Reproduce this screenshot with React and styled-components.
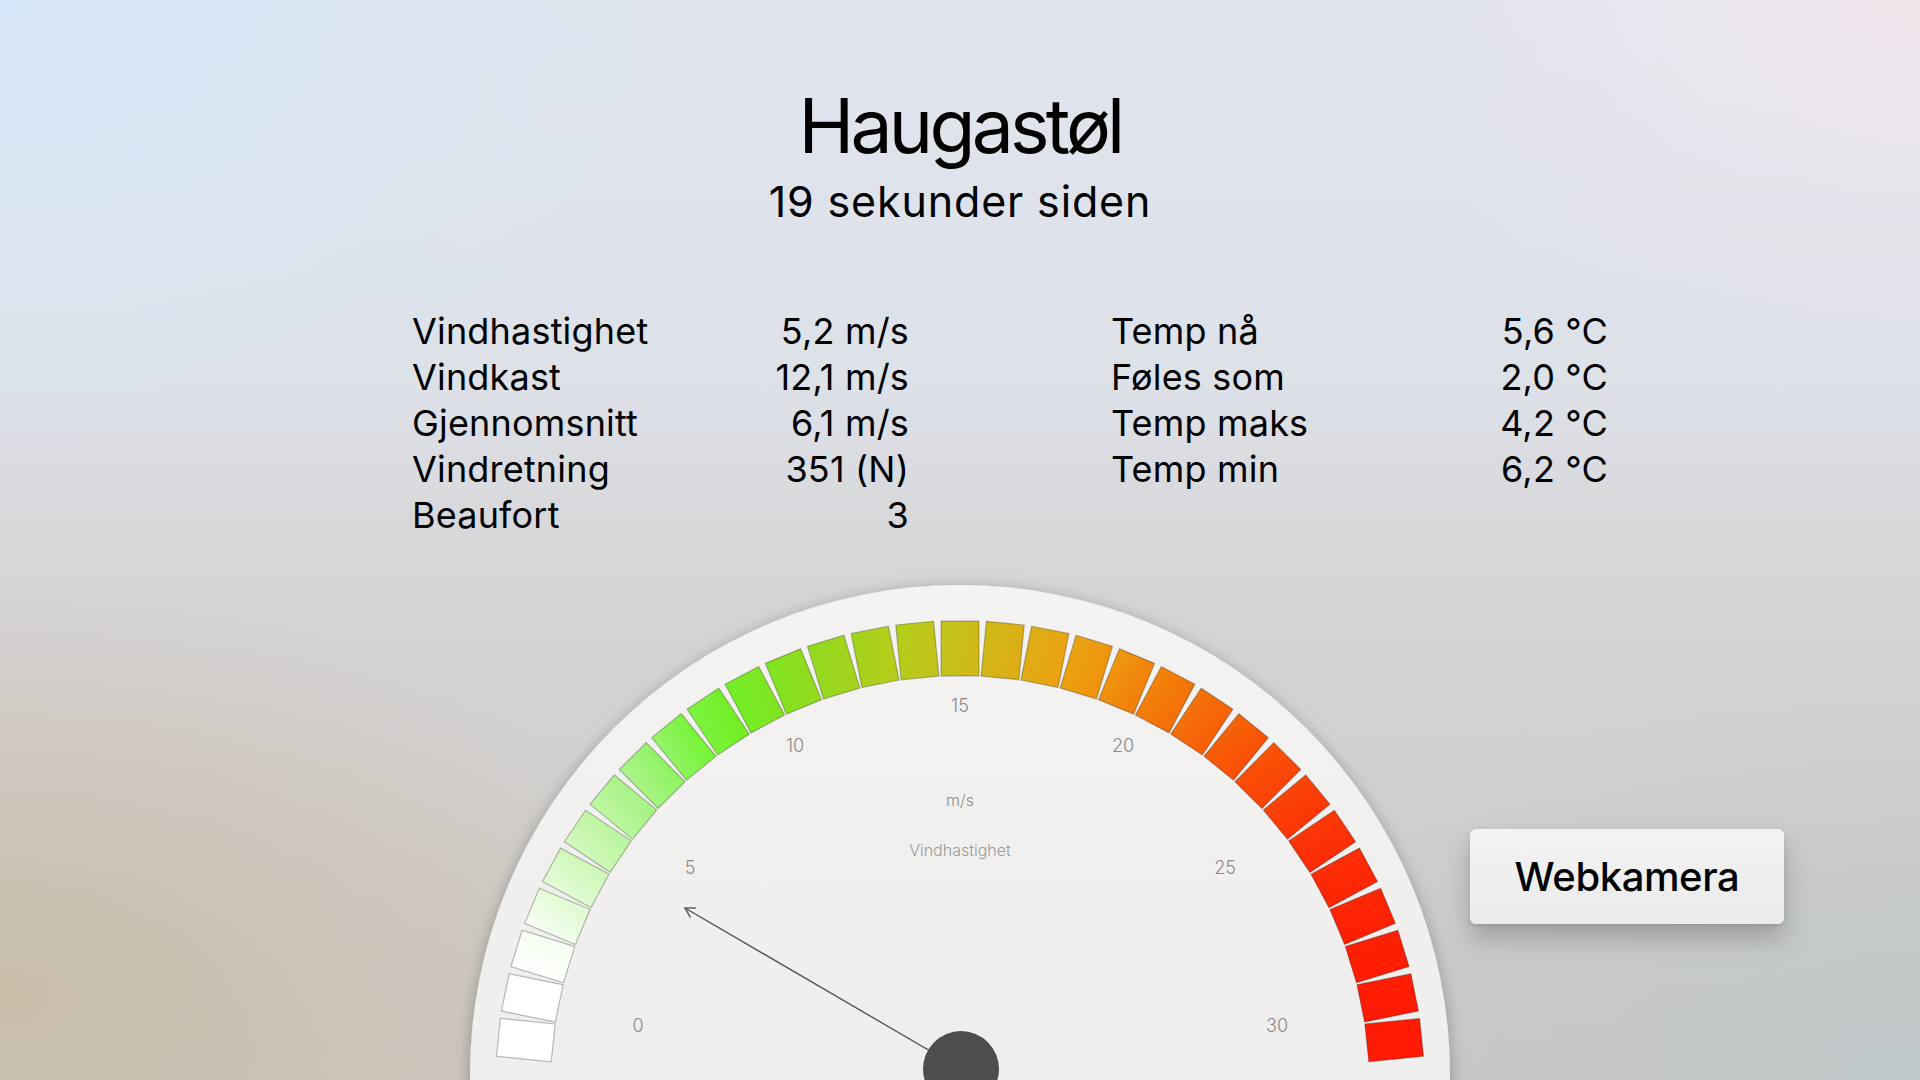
import React from "react";
import styled, { createGlobalStyle } from "styled-components";

const GlobalStyle = createGlobalStyle`
  html, body { margin: 0; padding: 0; height: 100%; overflow: hidden; }
  body { font-family: Inter, "Noto Sans", "Liberation Sans", sans-serif; color: #000; }
  #root { height: 100%; }
`;

const Page = styled.main`
  height: 100vh;
  width: 100vw;
  overflow: hidden;
  display: flex;
  flex-direction: column;
  align-items: center;
  background:
    radial-gradient(ellipse 900px 620px at 0% 0%, rgba(214, 232, 250, 0.95), rgba(214, 232, 250, 0) 72%),
    radial-gradient(ellipse 760px 520px at 100% 0%, rgba(241, 230, 236, 0.95), rgba(241, 230, 236, 0) 72%),
    radial-gradient(ellipse 900px 540px at 0% 92%, rgba(201, 189, 168, 0.95), rgba(201, 189, 168, 0) 76%),
    radial-gradient(ellipse 900px 520px at 100% 100%, rgba(191, 199, 201, 0.95), rgba(191, 199, 201, 0) 76%),
    linear-gradient(180deg, #e0e5ef 0%, #dde1e8 35%, #d6d4d6 55%, #cbc8c3 100%);
`;

const Header = styled.header`
  display: flex;
  flex-direction: column;
  align-items: center;
  padding-top: 88px;
`;

const Title = styled.h1`
  margin: 0;
  font-size: 75px;
  line-height: 76px;
  font-weight: 400;
  letter-spacing: -0.05em;
`;

const Subtitle = styled.p`
  margin: 16px 0 0;
  font-size: 43px;
  line-height: 43px;
  font-weight: 400;
  letter-spacing: 0.02em;
`;

const Stats = styled.section`
  align-self: flex-start;
  margin: 85px 0 0 412px;
  display: grid;
  grid-template-columns: 497px 497px;
  column-gap: 202px;
  align-items: start;
`;

const StatTable = styled.dl`
  margin: 0;
  display: grid;
  grid-template-columns: 1fr auto;
  grid-auto-rows: 46px;
  font-size: 36px;
  line-height: 46px;
  letter-spacing: 0.005em;
`;

const Label = styled.dt`
  margin: 0;
`;

const Value = styled.dd`
  margin: 0;
  text-align: right;
`;

const GaugeArea = styled.section`
  width: 100%;
  margin-top: 37px;
  display: grid;
  grid-template-columns: 1fr 1000px 1fr;
  align-items: start;
`;

const GaugeSvg = styled.svg`
  grid-column: 2;
  display: block;
  width: 1000px;
  height: 505px;
  overflow: visible;
  font-family: Inter, "Noto Sans", sans-serif;
`;

const CamButton = styled.button`
  grid-column: 3;
  justify-self: start;
  margin: 254px 0 0 10px;
  width: 314px;
  height: 95px;
  border: none;
  border-radius: 6px;
  background: linear-gradient(180deg, #f4f3f3 0%, #ecebeb 100%);
  box-shadow: 0 14px 26px rgba(0, 0, 0, 0.22), 0 2px 4px rgba(0, 0, 0, 0.08);
  font-family: Inter, "Noto Sans", sans-serif;
  font-size: 40px;
  font-weight: 500;
  letter-spacing: -0.01em;
  color: #000;
  padding: 0;
  cursor: pointer;
`;

const windStats = [
  ["Vindhastighet", "5,2 m/s"],
  ["Vindkast", "12,1 m/s"],
  ["Gjennomsnitt", "6,1 m/s"],
  ["Vindretning", "351 (N)"],
  ["Beaufort", "3"],
];

const tempStats = [
  ["Temp nå", "5,6 °C"],
  ["Føles som", "2,0 °C"],
  ["Temp maks", "4,2 °C"],
  ["Temp min", "6,2 °C"],
];

const stops = [
  [0, [255, 255, 255]],
  [2, [255, 255, 255]],
  [3, [236, 252, 228]],
  [5, [200, 247, 176]],
  [7, [160, 242, 124]],
  [9, [110, 245, 42]],
  [10, [118, 234, 34]],
  [12, [154, 214, 30]],
  [14, [188, 203, 26]],
  [15, [200, 192, 26]],
  [16, [214, 180, 24]],
  [17, [226, 168, 20]],
  [18, [240, 160, 16]],
  [19, [240, 140, 12]],
  [20, [242, 122, 10]],
  [21, [245, 106, 8]],
  [22, [248, 90, 6]],
  [23, [250, 74, 6]],
  [25, [252, 50, 5]],
  [27, [254, 34, 4]],
  [30, [255, 26, 3]],
];

function colorAt(v) {
  const t = Math.max(0, Math.min(30, v));
  for (let i = 0; i < stops.length - 1; i++) {
    const [a, ca] = stops[i];
    const [b, cb] = stops[i + 1];
    if (t >= a && t <= b) {
      const f = b === a ? 0 : (t - a) / (b - a);
      const c = ca.map((x, k) => Math.round(x + (cb[k] - x) * f));
      return `rgb(${c[0]},${c[1]},${c[2]})`;
    }
  }
  return "rgb(255,26,3)";
}

const FACE_CX = 500;
const FACE_CY = 500;
const RING_CX = 500;
const RING_CY = 510;
const START = 5.9;
const STEP = (180 - 2 * START) / 30;

const labels = [
  ["0", 178, 450],
  ["5", 230, 292],
  ["10", 335, 170],
  ["15", 500, 130],
  ["20", 663, 170],
  ["25", 765, 292],
  ["30", 817, 450],
];

function Gauge() {
  const segs = Array.from({ length: 31 }, (_, v) => v);
  const tip = [225, 333];
  const hub = [501, 494];
  const dx = tip[0] - hub[0];
  const dy = tip[1] - hub[1];
  const len = Math.hypot(dx, dy);
  const ux = -dx / len;
  const uy = -dy / len;
  const rot = (x, y, a) => [x * Math.cos(a) - y * Math.sin(a), x * Math.sin(a) + y * Math.cos(a)];
  const b1 = rot(ux, uy, Math.PI / 6);
  const b2 = rot(ux, uy, -Math.PI / 6);
  const L = 11;
  return (
    <GaugeSvg viewBox="0 0 1000 505">
      <defs>
        <filter id="faceShadow" x="-10%" y="-10%" width="120%" height="130%">
          <feDropShadow dx="0" dy="3" stdDeviation="8" floodColor="#000" floodOpacity="0.28" />
        </filter>
        <linearGradient id="faceFill" x1="0" y1="0" x2="0" y2="1">
          <stop offset="0" stopColor="#f5f3f2" />
          <stop offset="1" stopColor="#ebe9e8" />
        </linearGradient>
        {segs.map((v) => (
          <linearGradient key={v} id={`seg${v}`} x1="0" y1="0" x2="1" y2="0.3">
            <stop offset="0" stopColor={colorAt(v - 0.6)} />
            <stop offset="1" stopColor={colorAt(v + 0.6)} />
          </linearGradient>
        ))}
      </defs>
      <circle cx={FACE_CX} cy={FACE_CY} r="490" fill="url(#faceFill)" filter="url(#faceShadow)" />
      {segs.map((v) => {
        const phi = START + v * STEP - 90;
        return (
          <g key={v} transform={`translate(${RING_CX} ${RING_CY}) rotate(${phi})`}>
            <rect
              x="-19"
              y="-464"
              width="38"
              height="55"
              fill={`url(#seg${v})`}
              stroke="rgba(0,0,0,0.26)"
              strokeWidth="1.2"
            />
          </g>
        );
      })}
      {labels.map(([t, x, y]) => (
        <text
          key={t}
          x={x}
          y={y}
          textAnchor="middle"
          dominantBaseline="central"
          fontSize="18"
          fontWeight="300"
          fill="#8a8a8a"
        >
          {t}
        </text>
      ))}
      <text x="500" y="225" textAnchor="middle" dominantBaseline="central" fontSize="16" fontWeight="300" fill="#8c8c8c">
        m/s
      </text>
      <text x="500" y="275" textAnchor="middle" dominantBaseline="central" fontSize="16" fontWeight="300" fill="#9a9a9a">
        Vindhastighet
      </text>
      <line x1={hub[0]} y1={hub[1]} x2={tip[0]} y2={tip[1]} stroke="#555" strokeWidth="1.4" />
      <polyline
        points={`${tip[0] + b1[0] * L},${tip[1] + b1[1] * L} ${tip[0]},${tip[1]} ${tip[0] + b2[0] * L},${tip[1] + b2[1] * L}`}
        fill="none"
        stroke="#666"
        strokeWidth="1.6"
      />
      <circle cx={hub[0]} cy={hub[1]} r="38" fill="#4d4d4d" />
    </GaugeSvg>
  );
}

export default function App() {
  return (
    <>
      <GlobalStyle />
      <Page>
        <Header>
          <Title>Haugastøl</Title>
          <Subtitle>19 sekunder siden</Subtitle>
        </Header>
        <Stats>
          <StatTable>
            {windStats.map(([l, v]) => (
              <React.Fragment key={l}>
                <Label>{l}</Label>
                <Value>{v}</Value>
              </React.Fragment>
            ))}
          </StatTable>
          <StatTable>
            {tempStats.map(([l, v]) => (
              <React.Fragment key={l}>
                <Label>{l}</Label>
                <Value>{v}</Value>
              </React.Fragment>
            ))}
          </StatTable>
        </Stats>
        <GaugeArea>
          <Gauge />
          <CamButton type="button">Webkamera</CamButton>
        </GaugeArea>
      </Page>
    </>
  );
}
